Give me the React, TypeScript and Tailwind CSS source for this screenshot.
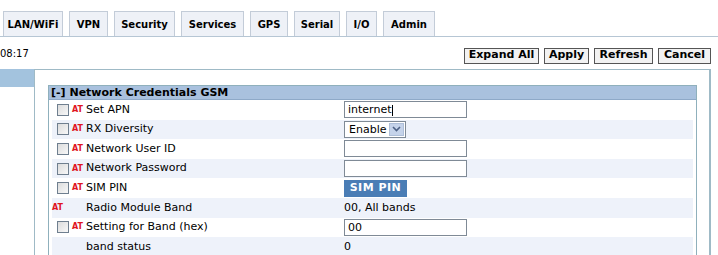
import React from 'react';

const tabs = [
  { label: 'LAN/WiFi', w: 'w-[60px]' },
  { label: 'VPN', w: 'w-[39px]' },
  { label: 'Security', w: 'w-[61px]' },
  { label: 'Services', w: 'w-[63px]' },
  { label: 'GPS', w: 'w-[38px]' },
  { label: 'Serial', w: 'w-[46px]' },
  { label: 'I/O', w: 'w-[31px]' },
  { label: 'Admin', w: 'w-[52px]' },
];

const buttons = [
  { label: 'Expand All', w: 'w-[75px]' },
  { label: 'Apply', w: 'w-[45px]' },
  { label: 'Refresh', w: 'w-[59px]' },
  { label: 'Cancel', w: 'w-[53px]' },
];

type Row = {
  label: string;
  check: boolean;
  at: boolean;
  value: React.ReactNode;
};

const Checkbox = () => (
  <span className="block w-[12px] h-[12px] border border-[#6f7f8f] bg-gradient-to-br from-[#dcdcdc] to-[#f8f8f8]" />
);

const At = () => (
  <span className="text-[8px] font-bold text-[#e0141e] leading-none">AT</span>
);

const TextInput = ({ value = '' }: { value?: string }) => (
  <div className="w-[123px] h-[17px] border border-[#7f8a96] bg-white text-[11px] leading-[15px] pl-[3px] text-black">
    {value}
  </div>
);

const rows: Row[] = [
  {
    label: 'Set APN',
    check: true,
    at: true,
    value: (
      <div className="w-[123px] h-[17px] border border-[#7f8a96] bg-white text-[11px] leading-[15px] pl-[3px] text-black">
        internet<span className="inline-block w-px h-[11px] bg-black align-middle" />
      </div>
    ),
  },
  {
    label: 'RX Diversity',
    check: true,
    at: true,
    value: (
      <div className="flex items-center w-[62px] h-[17px] border border-[#7f8a96] bg-white">
        <span className="flex-1 pl-[4px] text-[11px] text-black leading-none">Enable</span>
        <span className="flex items-center justify-center w-[15px] h-[13px] mr-[1px] bg-[#c5d3ea] border border-[#aebfd9]">
          <svg width="9" height="6" viewBox="0 0 9 6">
            <path d="M1 1 L4.5 4.5 L8 1" fill="none" stroke="#4d6185" strokeWidth="1.6" />
          </svg>
        </span>
      </div>
    ),
  },
  { label: 'Network User ID', check: true, at: true, value: <TextInput /> },
  { label: 'Network Password', check: true, at: true, value: <TextInput /> },
  {
    label: 'SIM PIN',
    check: true,
    at: true,
    value: (
      <div className="w-[63px] h-[17px] bg-[#4a7db5] text-white text-[11px] font-bold tracking-[0.5px] flex items-center justify-center">
        SIM PIN
      </div>
    ),
  },
  {
    label: 'Radio Module Band',
    check: false,
    at: true,
    value: <span className="text-[11px] text-black">00, All bands</span>,
  },
  { label: 'Setting for Band (hex)', check: true, at: true, value: <TextInput value="00" /> },
  {
    label: 'band status',
    check: false,
    at: false,
    value: <span className="text-[11px] text-black">0</span>,
  },
];

const App = () => {
  return (
    <div
      className="w-[718px] h-[255px] bg-white overflow-hidden text-[#111]"
      style={{ fontFamily: '"DejaVu Sans", Verdana, sans-serif' }}
    >
      {/* tabs */}
      <div className="flex gap-[6px] pl-[3px] pt-[11px] border-b border-[#b6c6d4] h-[37px]">
        {tabs.map(t => (
          <div
            key={t.label}
            className={`${t.w} h-[25px] border border-b-0 border-[#c3ccd8] bg-[#eef1f7] flex items-center justify-center text-[10px] font-bold text-black`}
          >
            {t.label}
          </div>
        ))}
      </div>

      {/* time + buttons */}
      <div className="flex items-center justify-between h-[32px] pr-[7px]">
        <span className="text-[10px] text-black">08:17</span>
        <div className="flex gap-[5px] pt-[5px]">
          {buttons.map(b => (
            <div
              key={b.label}
              className={`${b.w} h-[16px] border border-[#555] bg-[#f2f2f2] flex items-center justify-center text-[11px] font-bold text-black`}
            >
              {b.label}
            </div>
          ))}
        </div>
      </div>

      {/* content */}
      <div className="flex">
        <div className="w-[34px] shrink-0">
          <div className="h-[18px] bg-[#a3c3de]" />
        </div>
        <div className="w-[677px] h-[200px] border border-r-2 border-[#9fbac6] pl-[13px] pt-[15px] pr-[12px]">
          <div className="border border-[#8fb0bc] h-[180px]">
            <div className="h-[14px] bg-[#a9c1de] border-b border-[#8ea9c8] text-[11px] font-bold text-black leading-[13px] pl-[2px]">
              [-] Network Credentials GSM
            </div>
            <div className="px-[3px]">
              {rows.map((r, i) => (
                <div
                  key={r.label}
                  className={`flex items-center h-[19.6px] ${i % 2 === 1 ? 'bg-[#eef2fa]' : 'bg-white'}`}
                >
                  <div className="w-[292px] flex items-center shrink-0">
                    {r.check ? (
                      <>
                        <span className="w-[17px] flex justify-end">
                          <Checkbox />
                        </span>
                        <span className="w-[15px] flex justify-end pr-[1px]">
                          <At />
                        </span>
                      </>
                    ) : (
                      <span className="w-[32px] flex">{r.at ? <At /> : null}</span>
                    )}
                    <span className="text-[11px] text-black pl-[2px]">{r.label}</span>
                  </div>
                  <div className="flex items-center">{r.value}</div>
                </div>
              ))}
            </div>
          </div>
        </div>
      </div>
    </div>
  );
};

export default App;
